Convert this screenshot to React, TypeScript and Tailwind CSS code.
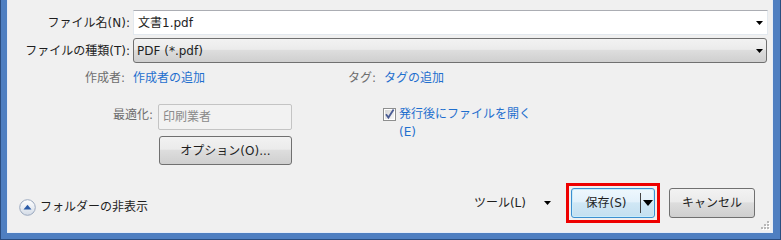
import React from "react";

function DropArrow({ w = 7, h = 4 }: { w?: number; h?: number }) {
  return (
    <svg width={w} height={h} viewBox={`0 0 ${w} ${h}`} className="block">
      <polygon points={`0,0 ${w},0 ${w / 2},${h}`} fill="#000" />
    </svg>
  );
}

function FolderToggleIcon() {
  return (
    <svg width="17" height="17" viewBox="0 0 17 17" className="block">
      <defs>
        <linearGradient id="ft" x1="0" y1="0" x2="0" y2="1">
          <stop offset="0" stopColor="#ffffff" />
          <stop offset="1" stopColor="#d3dbe6" />
        </linearGradient>
      </defs>
      <circle cx="8.5" cy="8.5" r="7.8" fill="url(#ft)" stroke="#9aa8be" strokeWidth="1" />
      <polygon points="4.5,10.5 12.5,10.5 8.5,5.8" fill="#2b5ba7" />
    </svg>
  );
}

function CheckBox() {
  return (
    <svg width="13" height="13" viewBox="0 0 13 13" className="block">
      <defs>
        <linearGradient id="cb" x1="0" y1="0" x2="1" y2="1">
          <stop offset="0" stopColor="#d6d6d6" />
          <stop offset="1" stopColor="#f8f8f8" />
        </linearGradient>
      </defs>
      <rect x="0.5" y="0.5" width="12" height="12" fill="#fff" stroke="#8e8f8f" />
      <rect x="2" y="2" width="9" height="9" fill="url(#cb)" />
      <path d="M3 6.2 L5.4 9.6 L10.6 1.6" fill="none" stroke="#4a5c94" strokeWidth="1.8" />
    </svg>
  );
}

function Grip() {
  const dots = [
    [6, 0],
    [3, 3],
    [6, 3],
    [0, 6],
    [3, 6],
    [6, 6],
  ];
  return (
    <svg width="9" height="9" viewBox="0 0 9 9" className="block">
      {dots.map(([x, y], i) => (
        <g key={i}>
          <rect x={x + 1} y={y + 1} width="2" height="2" fill="#ffffff" />
          <rect x={x} y={y} width="2" height="2" fill="#b8b8b8" />
        </g>
      ))}
    </svg>
  );
}

export default function App() {
  return (
    <div className="w-[781px] h-[240px] bg-[#4f7fc1] border-x border-b border-[#2b4d80] pl-[6px] pr-[7px] pb-[6px] font-['DejaVu_Sans','Noto_Sans_CJK_JP',sans-serif] text-[12px] leading-[16px] text-[#1e1e1e]">
      <div className="relative h-full bg-[#f0f0f0] border-x border-b border-[#e6edf7] flex flex-col">
        {/* File name row */}
        <div className="flex items-center mt-[10px] h-[25px]">
          <div className="w-[122px] text-right">ファイル名(N):</div>
          <div className="ml-[3px] w-[635px] h-[25px] bg-white border border-[#e3e9ef] border-t-[#abadb3] flex items-center pl-[4px] pr-[4px]">
            <span className="flex-1">文書1.pdf</span>
            <DropArrow />
          </div>
        </div>

        {/* File type row */}
        <div className="flex items-center mt-[3px] h-[25px]">
          <div className="w-[122px] text-right">ファイルの種類(T):</div>
          <div className="ml-[3px] w-[634px] h-[25px] rounded-[3px] border border-[#707070] bg-[linear-gradient(to_bottom,#f2f2f2_0%,#ebebeb_45%,#dddddd_50%,#cfcfcf_100%)] flex items-center pl-[3px] pr-[3px]">
            <span className="flex-1">PDF (*.pdf)</span>
            <DropArrow />
          </div>
        </div>

        {/* Author / tag row */}
        <div className="flex items-center mt-[6px] h-[18px]">
          <div className="w-[332px] flex items-center">
            <span className="w-[117px] text-right text-[#6d6d6d]">作成者:</span>
            <span className="ml-[8px] text-[#1f6fce]">作成者の追加</span>
          </div>
          <span className="ml-[8px] text-[#6d6d6d]">タグ:</span>
          <span className="ml-[8px] text-[#1f6fce]">タグの追加</span>
        </div>

        {/* Optimize / open after row */}
        <div className="flex mt-[17px]">
          <div className="flex flex-col">
            <div className="flex">
              <span className="w-[145px] text-right text-[#6d6d6d] pt-[3px]">最適化:</span>
              <div className="ml-[5px] w-[134px] h-[26px] border border-[#c4c4c4] rounded-[2px] bg-[#f2f2f2] pl-[4px] pt-[4px] text-[#8a8a8a]">
                印刷業者
              </div>
            </div>
            <div className="ml-[151px] mt-[6px] w-[133px] h-[29px] rounded-[3px] border border-[#707070] bg-[linear-gradient(to_bottom,#f2f2f2_0%,#ebebeb_45%,#dddddd_50%,#cfcfcf_100%)] flex items-center justify-center">
              オプション(O)...
            </div>
          </div>
          <div className="ml-[91px] flex items-start">
            <div className="mt-[4px]">
              <CheckBox />
            </div>
            <div className="ml-[3px] mt-[1px] text-[#1f6fce] leading-[18px]">
              <div>発行後にファイルを開く</div>
              <div>(E)</div>
            </div>
          </div>
        </div>

        {/* Bottom row */}
        <div className="mt-auto mb-[9px] h-[40px] flex items-center">
          <div className="pl-[11px] mt-[8px] flex items-center">
            <FolderToggleIcon />
            <span className="ml-[4px]">フォルダーの非表示</span>
          </div>
          <div className="flex-1" />
          <span>ツール(L)</span>
          <div className="ml-[18px]">
            <DropArrow w={7} h={4} />
          </div>
          <div className="ml-[15px] border-[3px] border-[#ee0000] p-[2px]">
            <div className="w-[84px] h-[30px] rounded-[3px] border border-[#3c8fd0] shadow-[inset_0_0_0_1px_#c9ecfb] bg-[linear-gradient(to_bottom,#eef7fd_0%,#e3f1fb_45%,#d0e7f5_50%,#c3dff0_100%)] flex items-center">
              <div className="w-[68px] text-center">保存(S)</div>
              <div className="w-px h-[20px] bg-[#444]" />
              <div className="flex-1 flex justify-center">
                <DropArrow w={10} h={6} />
              </div>
            </div>
          </div>
          <div className="ml-[9px] mr-[17px] w-[86px] h-[30px] rounded-[3px] border border-[#707070] bg-[linear-gradient(to_bottom,#f2f2f2_0%,#ebebeb_45%,#dddddd_50%,#cfcfcf_100%)] flex items-center justify-center">
            キャンセル
          </div>
        </div>

        <div className="absolute right-[2px] bottom-[2px]">
          <Grip />
        </div>
      </div>
    </div>
  );
}
